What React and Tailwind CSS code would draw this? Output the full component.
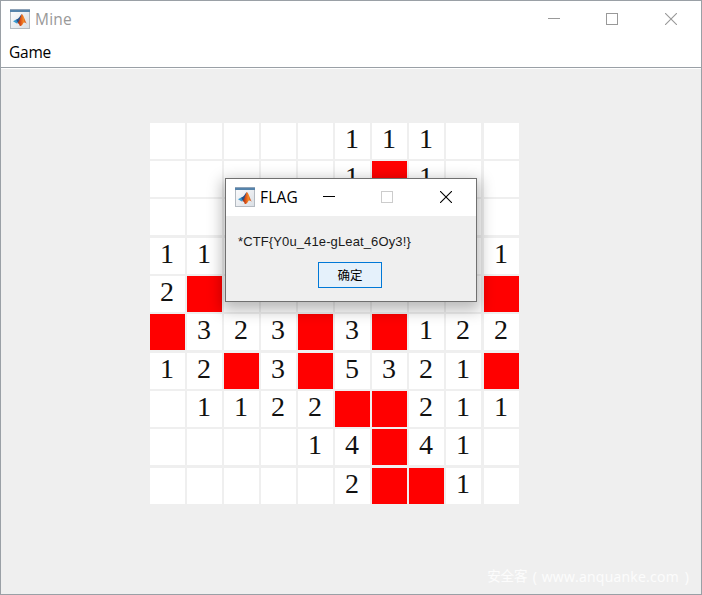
import React from "react";

const BOARD = [
  ".....111..",
  ".....1*1..",
  "..........",
  "11.......1",
  "2*.......*",
  "*323*3*122",
  "12*3*5321*",
  ".1122**211",
  "....14*41.",
  ".....2**1.",
];

function MatlabIcon() {
  return (
    <svg width="20" height="20" viewBox="0 0 20 20" className="block shrink-0">
      <defs>
        <linearGradient id="face" x1="0" y1="0" x2="1" y2="1">
          <stop offset="0" stopColor="#fdfdfe" />
          <stop offset="1" stopColor="#d9dee4" />
        </linearGradient>
        <linearGradient id="peak" x1="0" y1="0" x2="1" y2="0">
          <stop offset="0" stopColor="#8c2414" />
          <stop offset="0.4" stopColor="#e2581a" />
          <stop offset="0.65" stopColor="#f28a2a" />
          <stop offset="1" stopColor="#c53a12" />
        </linearGradient>
      </defs>
      <rect x="0.5" y="0.5" width="19" height="19" fill="url(#face)" stroke="#b4bac1" />
      <rect x="0" y="0" width="20" height="1" fill="#8fa3b8" />
      <rect x="0" y="1" width="20" height="2" fill="#5583ab" />
      <path d="M3 12.2 L7 10.1 L9 12.5 L6.8 14.5 Z" fill="#3a9ad0" />
      <path d="M6.6 10.4 C9 9.8 9.8 7 11.8 5 L10.8 11 L8.4 14 L6.6 12 Z" fill="#27508a" />
      <path d="M11.8 5 C13.6 5.6 14.4 10.5 16.8 14.8 C15 13.2 13.8 13.2 12.8 15 C11.8 16.8 10.6 17.4 9.8 17 C9.4 15.5 8.6 14 7.2 14.4 C9.6 12.5 10.2 8 11.8 5 Z" fill="url(#peak)" />
    </svg>
  );
}

function WindowButtons({ className, maxColor }) {
  return (
    <div className={className}>
      <svg width="12" height="12" viewBox="0 0 12 12" shapeRendering="crispEdges">
        <path d="M0 5.5H12" stroke="currentColor" />
      </svg>
      <svg width="12" height="12" viewBox="0 0 12 12" shapeRendering="crispEdges">
        <rect x="0.5" y="0.5" width="11" height="11" fill="none" stroke={maxColor} />
      </svg>
      <svg width="12" height="12" viewBox="0 0 12 12" className="ml-px">
        <path d="M0 0L12 12M12 0L0 12" stroke="currentColor" strokeWidth="1.1" />
      </svg>
    </div>
  );
}

function Dialog() {
  return (
    <div className="absolute left-[224px] top-[177px] flex h-[124px] w-[252px] flex-col border border-[#707070] bg-[#efefef] shadow-[0_5px_14px_3px_rgba(0,0,0,0.28)]">
      <div className="flex h-[37px] shrink-0 items-start bg-white pl-[9px] pt-[8px]">
        <MatlabIcon />
        <span className="ml-[5px] mt-[-1px] w-[63px] text-[15.5px] leading-[22px] tracking-[0.2px] text-black">FLAG</span>
        <WindowButtons className="mt-[4px] flex gap-[46px] text-black" maxColor="#cccccc" />
      </div>
      <div className="h-[46px] whitespace-nowrap pl-[12px] pt-[17px] font-['Liberation_Sans',Arial,sans-serif] text-[13px] leading-[18px] tracking-[0.12px] text-[#1a1a1a]">
        *CTF{"{"}Y0u_41e-gLeat_6Oy3!{"}"}
      </div>
      <button className="ml-[92px] h-[26px] w-[64px] border border-[#0078d7] bg-[#e5f1fb] font-['Noto_Sans_CJK_SC',sans-serif] text-[12.5px] leading-[24px] text-black">
        确定
      </button>
    </div>
  );
}

export default function App() {
  return (
    <div className="relative flex h-[595px] w-[702px] flex-col overflow-hidden border border-[#9aa0a6] bg-[#efefef] font-['Open_Sans','Noto_Sans_CJK_SC',sans-serif]">
      <header className="h-[67px] shrink-0 border-b border-[#9aa0a6] bg-white">
        <div className="flex h-[38px] items-start pl-[9px] pt-[8px]">
          <MatlabIcon />
          <span className="ml-[5px] mt-[-1px] w-[513px] text-[15.5px] leading-[22px] tracking-[0.2px] text-[#999999]">Mine</span>
          <WindowButtons className="mt-[4px] flex gap-[46px] text-[#999999]" maxColor="#999999" />
        </div>
        <div className="pl-[8px] pt-[2px] text-[15.5px] leading-[22px] tracking-[-0.25px] text-black">Game</div>
      </header>
      <div className="h-px shrink-0 bg-white" />
      <main className="grid grow grid-cols-[repeat(8,37px)_38px_35px] grid-rows-[38px_38px_39px_38px_38px_39px_38px_38px_39px_36px] pl-[149px] pt-[54px]">
        {BOARD.join("").split("").map((cell, i) => (
          <div
            key={i}
            className={
              "h-[36px] w-[35px] pr-px text-center font-['Liberation_Serif','Times_New_Roman',serif] text-[28px] leading-[31px] text-[#111111] " +
              (cell === "*" ? "bg-[#ff0000]" : "bg-white")
            }
          >
            {cell === "." || cell === "*" ? "" : cell}
          </div>
        ))}
      </main>
      <footer className="mb-[7px] flex h-[22px] shrink-0 items-center justify-end whitespace-nowrap pr-[12px] text-[14px] text-white/80">
        <span className="text-[13.5px]">安全客</span>
        <span className="ml-[5px]">(</span>
        <span className="ml-[5px] tracking-[0.25px]">www.anquanke.com</span>
        <span className="ml-[6px]">)</span>
      </footer>
      <Dialog />
    </div>
  );
}
